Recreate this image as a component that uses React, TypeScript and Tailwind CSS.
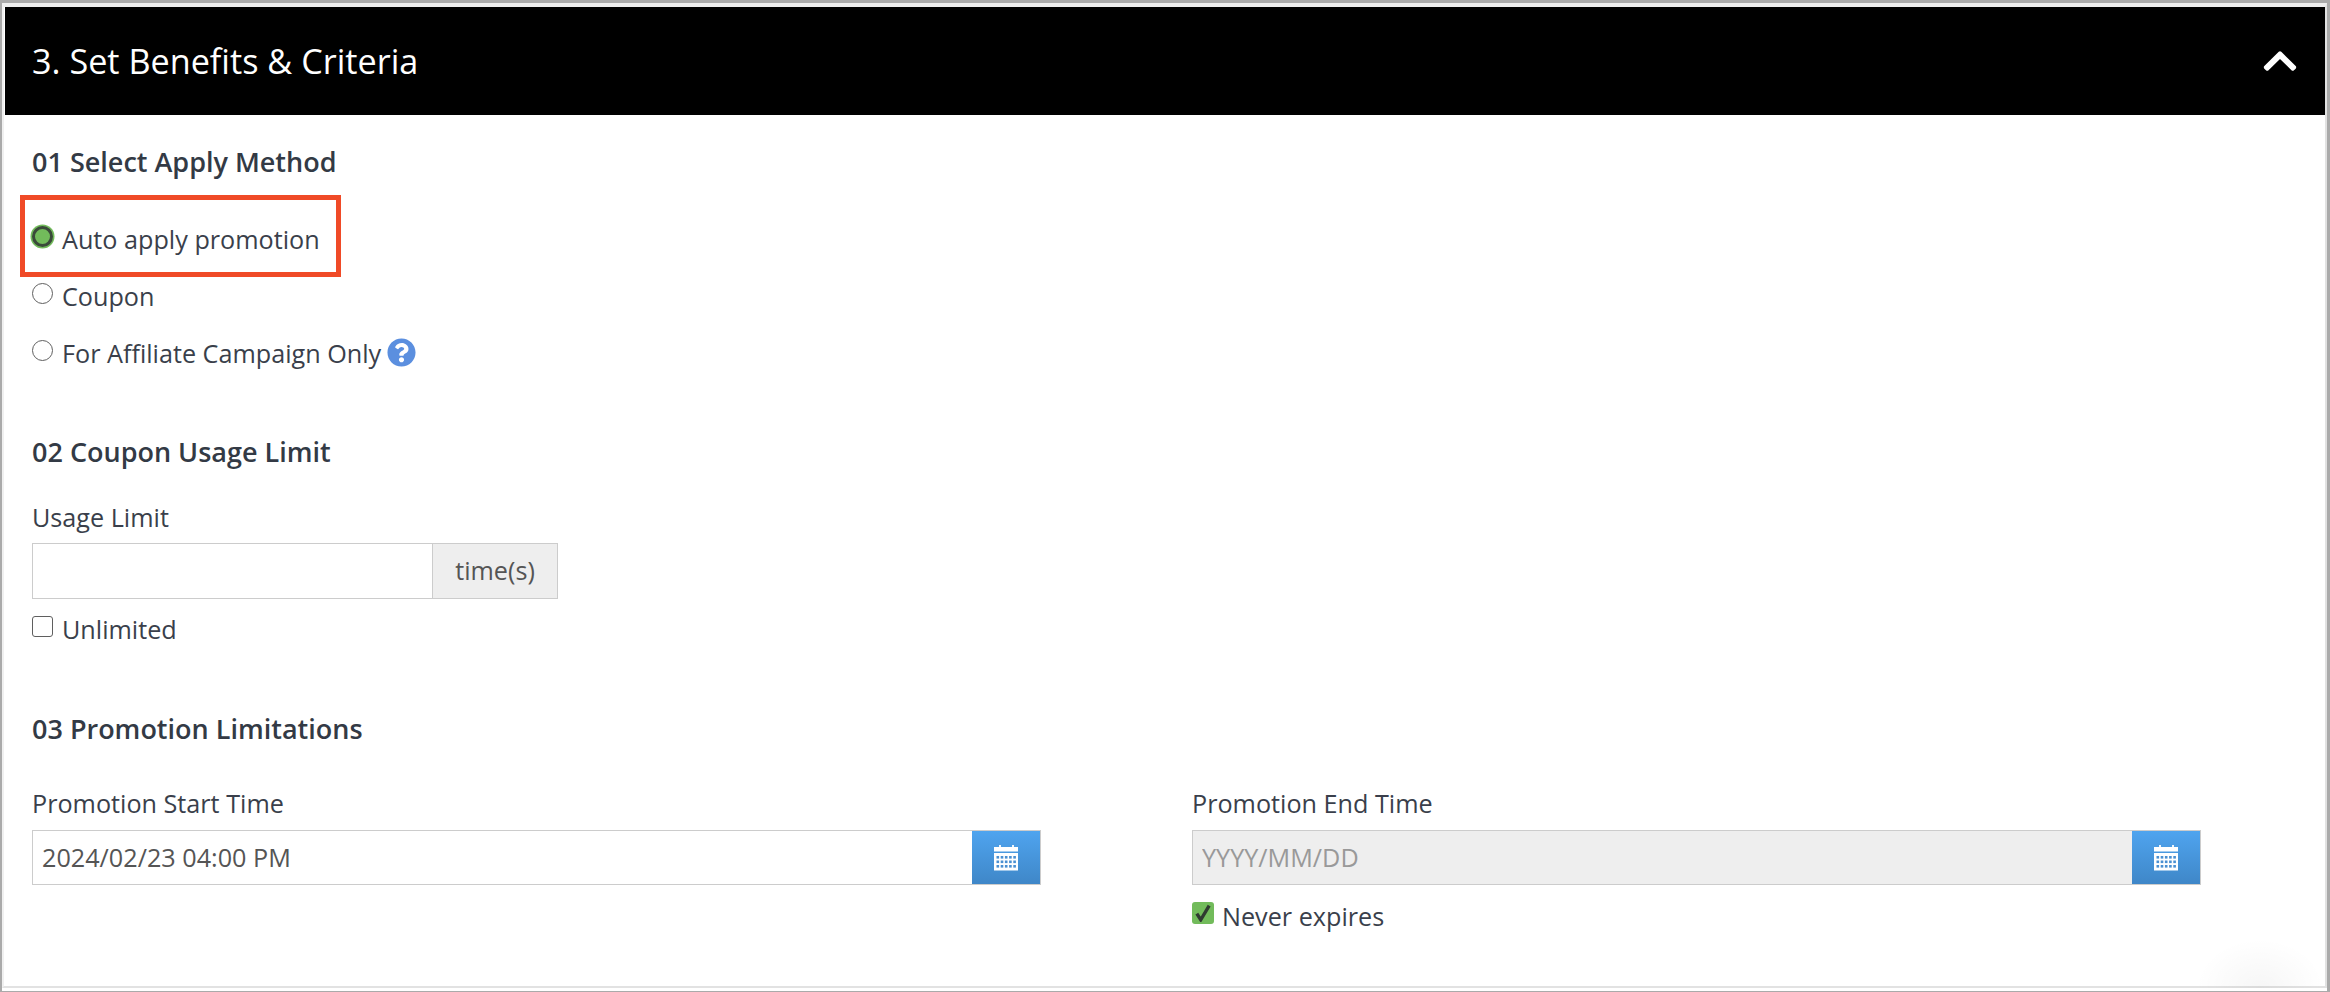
import React from "react";
import { FaChevronUp, FaQuestionCircle } from "react-icons/fa";

function CalendarIcon() {
  const cols = [0, 1, 2, 3, 4];
  const rows = [0, 1, 2];
  return (
    <svg width="24" height="26" viewBox="0 0 24 26" aria-hidden="true">
      <rect x="5" y="0" width="2" height="3" fill="#fff" opacity="0.9" />
      <rect x="18" y="0" width="2" height="3" fill="#fff" opacity="0.9" />
      <rect x="0" y="2" width="24" height="4.5" fill="#fff" />
      <rect x="0" y="8" width="24" height="17.5" fill="#fff" />
      {rows.map((r) =>
        cols.map((c) => (
          <rect key={`${r}-${c}`} x={2.5 + c * 4.2} y={11 + r * 4.5} width="2.6" height="2.6" fill="#4a90d2" />
        ))
      )}
    </svg>
  );
}

function SectionTitle({ children }: { children: React.ReactNode }) {
  return <h3 className="h-[36px] text-[27px] leading-[36px] font-semibold text-[#333a45]">{children}</h3>;
}

function RadioRow({ label, checked, children }: { label: string; checked?: boolean; children?: React.ReactNode }) {
  return (
    <label className="flex h-[57px] items-center">
      <input
        type="radio"
        name="apply"
        defaultChecked={checked}
        className="mb-[5px] h-[21px] w-[21px] appearance-none rounded-full border-[1.5px] border-[#5f5f5f] bg-white checked:border-[3px] checked:border-[#3a4a3a] checked:bg-[#72bb5b] checked:shadow-[0_0_0_1.5px_#72bb5b]"
      />
      <span className="ml-[9px] text-[25.2px] leading-[36px] text-[#3a3f4b]">{label}</span>
      {children}
    </label>
  );
}

function DateField({ label, value, disabled }: { label: string; value?: string; disabled?: boolean }) {
  return (
    <div className="w-[1009px]">
      <div className="h-[36px] text-[25.2px] leading-[36px] text-[#3a3f4b]">{label}</div>
      <div className="mt-[9px] flex h-[55px] border border-[#cccccc]">
        <input
          readOnly
          disabled={disabled}
          defaultValue={value}
          placeholder="YYYY/MM/DD"
          className={`min-w-0 flex-1 px-[9px] text-[25.2px] outline-none placeholder:text-[#999999] ${
            disabled ? "bg-[#eeeeee]" : "bg-white text-[#555555]"
          }`}
        />
        <button className="flex w-[68px] items-center justify-center bg-gradient-to-b from-[#4fa4ef] to-[#3f87c8]">
          <CalendarIcon />
        </button>
      </div>
    </div>
  );
}

export default function App() {
  return (
    <div className="relative h-[992px] w-[2330px] overflow-hidden border-t-[3px] border-r-[3px] border-b-[1px] border-l-[2px] border-[#aaaaaa] bg-white font-['Open_Sans',sans-serif]">
      <div className="h-[985px] border-t-[4px] border-r-2 border-b-2 border-l-2 border-t-[#eeeeee] border-r-[#e2e2e2] border-b-[#e2e2e2] border-l-[#f0f0f0]">
        <header className="ml-[1px] flex h-[108px] items-center justify-between bg-black pr-[26px] pl-[27px]">
          <h2 className="text-[34.2px] font-normal text-white">3. Set Benefits &amp; Criteria</h2>
          <FaChevronUp className="text-white" size={38} />
        </header>

        <div className="px-[28px] pt-[29px]">
          <SectionTitle>01 Select Apply Method</SectionTitle>
          <div className="mt-[30px]">
            <RadioRow label="Auto apply promotion" checked />
            <RadioRow label="Coupon" />
            <RadioRow label="For Affiliate Campaign Only">
              <FaQuestionCircle className="mb-[1px] ml-[6px] text-[#5b8fdf]" size={29} />
            </RadioRow>
          </div>

          <div className="mt-[53px]">
            <SectionTitle>02 Coupon Usage Limit</SectionTitle>
          </div>
          <div className="mt-[29px] h-[36px] text-[25.2px] leading-[36px] text-[#3a3f4b]">Usage Limit</div>
          <div className="mt-[8px] flex h-[56px] w-[526px] border border-[#cccccc]">
            <input className="min-w-0 flex-1 bg-white outline-none" />
            <span className="flex w-[125px] items-center justify-center border-l border-[#cccccc] bg-[#eeeeee] text-[25.2px] text-[#555555]">
              time(s)
            </span>
          </div>
          <label className="mt-[12px] flex h-[36px] items-center">
            <input
              type="checkbox"
              className="mb-[6px] h-[21px] w-[21px] appearance-none rounded-[3px] border-[1.5px] border-[#5f5f5f] bg-white"
            />
            <span className="ml-[9px] text-[25.2px] leading-[36px] text-[#3a3f4b]">Unlimited</span>
          </label>

          <div className="mt-[64px]">
            <SectionTitle>03 Promotion Limitations</SectionTitle>
          </div>
          <div className="mt-[38px] flex items-start gap-[151px]">
            <DateField label="Promotion Start Time" value="2024/02/23 04:00 PM" />
            <div>
              <DateField label="Promotion End Time" disabled />
              <label className="mt-[13px] flex h-[36px] items-center">
                <span className="mb-[6px] flex h-[22px] w-[22px] items-center justify-center rounded-[3px] bg-[#72bb5b]">
                  <svg width="16" height="18" viewBox="0 0 14 16" aria-hidden="true">
                    <path d="M1.5 8.5 L5 14 L12.5 1.5" fill="none" stroke="#2f3a30" strokeWidth="3" />
                  </svg>
                </span>
                <span className="ml-[8px] text-[25.2px] leading-[36px] text-[#3a3f4b]">Never expires</span>
              </label>
            </div>
          </div>
        </div>
      </div>

      {/* annotation drawn over the form */}
      <div className="absolute top-[192px] left-[18px] h-[82px] w-[321px] border-[5px] border-[#f04a27]" />
      {/* faint shadow in the lower right corner */}
      <div className="pointer-events-none absolute right-[2px] bottom-[3px] h-[50px] w-[130px] bg-[radial-gradient(ellipse_at_bottom,rgba(0,0,0,0.035),transparent_70%)]" />
    </div>
  );
}
